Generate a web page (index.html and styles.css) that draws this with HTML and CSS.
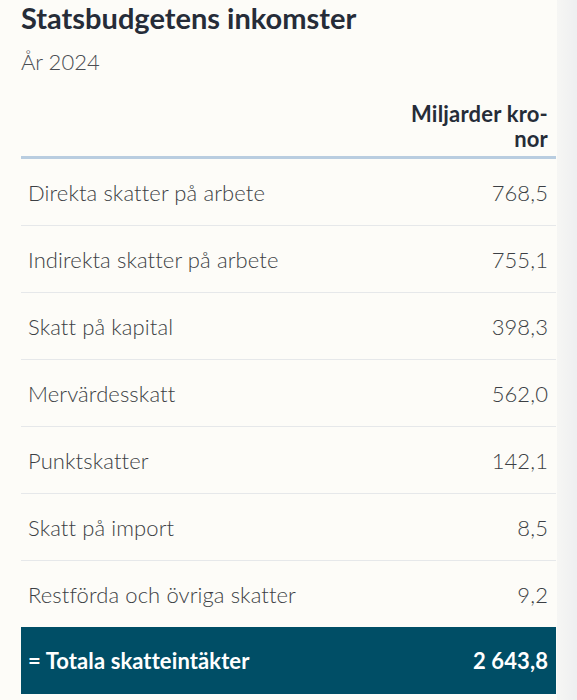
FILE: index.html
```html
<!DOCTYPE html>
<html lang="sv">
<head>
    <meta charset="UTF-8">
    <title>Statsbudgetens inkomster</title>
    <link rel="stylesheet" href="styles.css">
</head>

<body>
    <div class="page">
        <h1>Statsbudgetens inkomster</h1>
        <p class="year">År 2024</p>
        <table class="budget">
            <thead>
                <tr>
                    <th></th>
                    <th class="unit">Miljarder kro-<br>nor</th>
                </tr>
            </thead>
            <tbody>
                <tr><td>Direkta skatter på arbete</td><td class="num">768,5</td></tr>
                <tr><td>Indirekta skatter på arbete</td><td class="num">755,1</td></tr>
                <tr><td>Skatt på kapital</td><td class="num">398,3</td></tr>
                <tr><td>Mervärdesskatt</td><td class="num">562,0</td></tr>
                <tr><td>Punktskatter</td><td class="num">142,1</td></tr>
                <tr><td>Skatt på import</td><td class="num">8,5</td></tr>
                <tr><td>Restförda och övriga skatter</td><td class="num">9,2</td></tr>
            </tbody>
            <tfoot>
                <tr><td>= Totala skatteintäkter</td><td class="num">2 643,8</td></tr>
            </tfoot>
        </table>
    </div>
    <div class="edge"></div>
</body>
</html>
```

FILE: styles.css
```css
body {
    margin: 0;
    background: #fdfcf8;
    font-family: Lato, 'Open Sans', sans-serif;
    color: #2a303c;
}

.page {
    padding: 0 21px 0 21px;
    width: 535px;
}

h1 {
    font-size: 29px;
    font-weight: 700;
    margin: 0;
    line-height: 36px;
    color: #262c38;
}

.year {
    font-size: 22px;
    font-weight: 300;
    color: #4a4d52;
    margin: 12px 0 0 0;
    line-height: 28px;
}

.budget {
    width: 100%;
    border-collapse: collapse;
    margin-top: 25px;
}

.budget th {
    font-size: 22px;
    font-weight: 700;
    line-height: 25px;
    letter-spacing: 0.2px;
    padding: 0 8px 5px 0;
    border-bottom: 3px solid #b9cde0;
    text-align: right;
    color: #262c38;
}

.budget td {
    font-size: 22px;
    font-weight: 300;
    letter-spacing: 0.1px;
    color: #3c3f44;
    height: 66px;
    padding: 0 8px 0 7px;
    border-bottom: 1px solid #e6e8ea;
}

.budget tbody tr:last-child td {
    border-bottom: none;
}

.budget td.num {
    text-align: right;
    padding-right: 8px;
}

.budget tfoot td {
    background: #004e66;
    color: #fff;
    font-weight: 700;
    height: 67px;
    border: none;
}

.edge {
    position: fixed;
    top: 0;
    right: 0;
    width: 20px;
    height: 100%;
    background: linear-gradient(90deg, #f6f6f4, #eeeff0);
}
```
